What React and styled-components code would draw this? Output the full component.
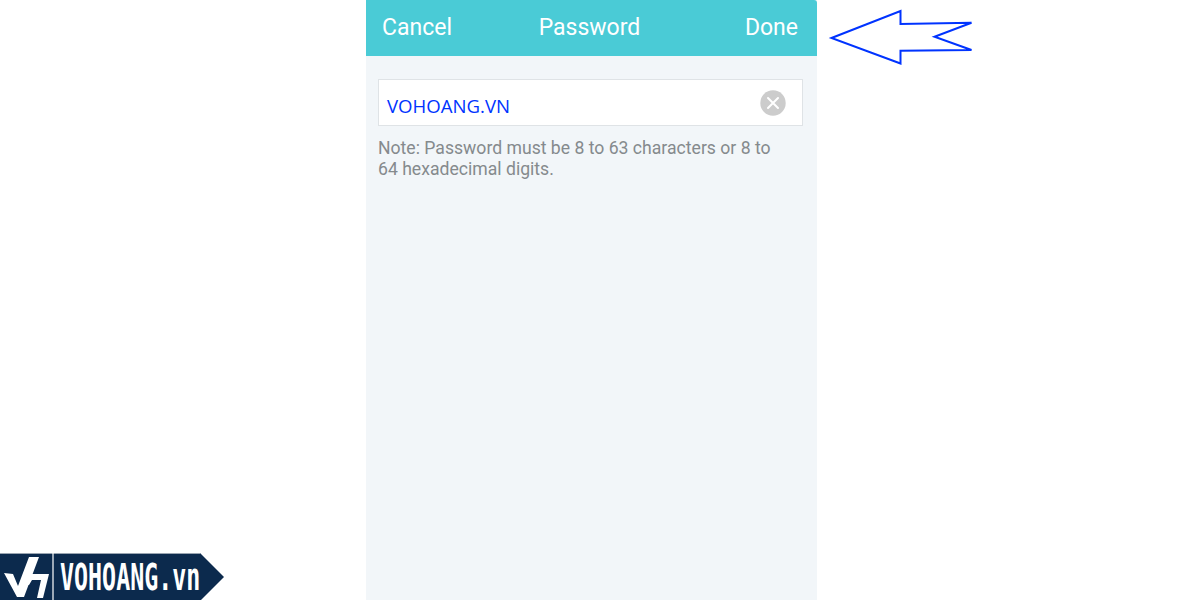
import React from "react";
import styled, { createGlobalStyle } from "styled-components";

const GlobalStyle = createGlobalStyle`
  html, body {
    margin: 0;
    padding: 0;
    background: #fff;
  }
  body {
    font-family: "Roboto", "Liberation Sans", sans-serif;
  }
`;

const Page = styled.div`
  position: relative;
  width: 1200px;
  height: 600px;
  overflow: hidden;
  padding-left: 366px;
  box-sizing: border-box;
`;

const Phone = styled.div`
  width: 451px;
  height: 600px;
  background: #f2f6f9;
`;

const Header = styled.div`
  height: 56px;
  background: #4acbd6;
  border-top-right-radius: 3px;
  display: flex;
  align-items: center;
  justify-content: space-between;
  padding: 0 19px 1px 16px;
  box-sizing: border-box;
  color: #fff;
  font-size: 23px;
`;

const Title = styled.span`
  margin-right: 18px;
`;

const Field = styled.div`
  margin: 23px 14px 0 12px;
  height: 47px;
  box-sizing: border-box;
  background: #fff;
  border: 1px solid #dfe3e6;
  display: flex;
  align-items: center;
  justify-content: space-between;
  padding: 0 16px 0 8px;
`;

const Value = styled.span`
  color: #0033ff;
  font-family: "Open Sans", sans-serif;
  font-size: 18.6px;
  padding-top: 6px;
`;

const Note = styled.p`
  margin: 12px 30px 0 12px;
  color: #858a8d;
  font-size: 17.63px;
  line-height: 21px;
`;

const ArrowIcon = styled.svg`
  position: absolute;
  left: 825px;
  top: 5px;
`;

const Logo = styled.div`
  position: absolute;
  left: 0;
  bottom: 0;
  width: 224px;
  height: 47px;
  color: #fff;
`;

const LogoShape = styled.svg`
  position: absolute;
  left: 0;
  top: 0;
`;

const LogoText = styled.span`
  position: absolute;
  left: 60px;
  top: 4px;
  font-family: "DejaVu Sans Mono", monospace;
  font-weight: 700;
  font-size: 37px;
  line-height: 42px;
  white-space: nowrap;
  transform: scaleX(0.63);
  transform-origin: left center;
`;

function ClearIcon() {
  return (
    <svg width="26" height="26" viewBox="0 0 26 26">
      <circle cx="13" cy="13" r="12.7" fill="#cccccc" />
      <path d="M8 8l10 10M18 8L8 18" stroke="#fff" strokeWidth="2" strokeLinecap="round" />
    </svg>
  );
}

export default function App() {
  return (
    <Page>
      <GlobalStyle />
      <Phone>
        <Header>
          <span>Cancel</span>
          <Title>Password</Title>
          <span>Done</span>
        </Header>
        <Field>
          <Value>VOHOANG.VN</Value>
          <ClearIcon />
        </Field>
        <Note>
          Note: Password must be 8 to 63 characters or 8 to 64 hexadecimal digits.
        </Note>
      </Phone>
      <ArrowIcon width="150" height="64" viewBox="0 0 150 64">
        <path
          d="M6.5 33L75.5 6V19L146.5 17.7L109.5 31.7L146.5 45L75.5 45.7V58.5Z"
          fill="#fff"
          stroke="#0033ff"
          strokeWidth="2"
        />
      </ArrowIcon>
      <Logo>
        <LogoShape width="224" height="47" viewBox="0 0 224 47">
          <path d="M0 0H200L224 24L201 47H0Z" fill="#0c2a4d" />
          <path d="M0 .5H200" stroke="#9aa5b1" strokeWidth="1" />
          <path d="M53 0V47" stroke="#fff" strokeWidth="1.2" />
          <path d="M4 20L13 21L18 33L29 4H39L24 44H17Z" fill="#fff" />
          <path d="M28 21H49L43 45H37L41 27H32L29 32H25Z" fill="#fff" />
        </LogoShape>
        <LogoText>VOHOANG.vn</LogoText>
      </Logo>
    </Page>
  );
}
